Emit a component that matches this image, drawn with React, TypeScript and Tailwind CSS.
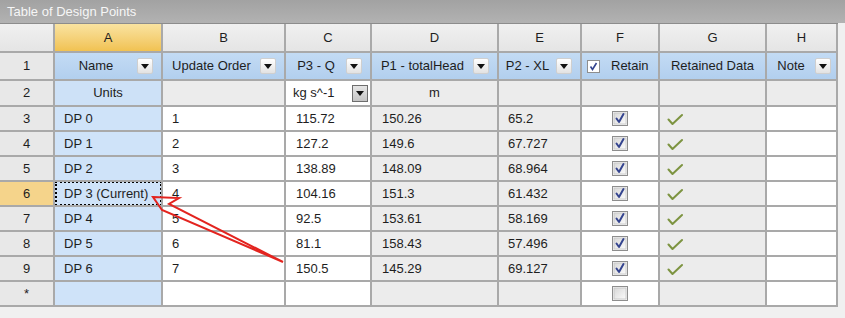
import React from "react";

const GRID =
  "grid grid-cols-[55px_108px_123px_86px_127px_83px_78px_107px_71px]";
const CELL =
  "border-r-2 border-b-2 border-[#a9a9a9] flex items-center text-[13px] text-[#1e1e1e] overflow-hidden whitespace-nowrap";

const rows = [
  ["DP 0", "1", "115.72", "150.26", "65.2"],
  ["DP 1", "2", "127.2", "149.6", "67.727"],
  ["DP 2", "3", "138.89", "148.09", "68.964"],
  ["DP 3 (Current)", "4", "104.16", "151.3", "61.432"],
  ["DP 4", "5", "92.5", "153.61", "58.169"],
  ["DP 5", "6", "81.1", "158.43", "57.496"],
  ["DP 6", "7", "150.5", "145.29", "69.127"],
];

const DropButton = () => (
  <div className="w-4 h-4 shrink-0 rounded-[2px] border border-[#cfcfcf] bg-gradient-to-b from-white to-[#e2e2e2] flex items-center justify-center">
    <svg width="8" height="5" viewBox="0 0 8 5">
      <polygon points="0,0 8,0 4,5" fill="#111" />
    </svg>
  </div>
);

const ComboButton = () => (
  <div className="w-4 h-[17px] shrink-0 border border-[#6e6e6e] bg-gradient-to-b from-[#e6e6e6] to-[#c4c4c4] flex items-center justify-center">
    <svg width="8" height="5" viewBox="0 0 8 5">
      <polygon points="0,0 8,0 4,5" fill="#111" />
    </svg>
  </div>
);

const CheckBox = ({ checked, size = 16 }: { checked: boolean; size?: number }) => (
  <svg width={size} height={size - 1} viewBox="0 0 16 15">
    <defs>
      <linearGradient id="cbg" x1="0" y1="0" x2="1" y2="1">
        <stop offset="0" stopColor="#d8d8d8" />
        <stop offset="1" stopColor="#fbfbfb" />
      </linearGradient>
    </defs>
    <rect x="0.5" y="0.5" width="15" height="14" fill="#f6f6f6" stroke="#8e8e8e" />
    <rect x="2" y="2" width="12" height="11" fill="url(#cbg)" stroke="#c4c4c4" strokeWidth="0.8" />
    {checked && (
      <path
        d="M4.5 7.5 L7 11 L11.5 3"
        fill="none"
        stroke="#34448f"
        strokeWidth="2"
        strokeLinecap="round"
        strokeLinejoin="round"
      />
    )}
  </svg>
);

const GreenCheck = () => (
  <svg width="16" height="14" viewBox="0 0 16 14">
    <path
      d="M1.5 7.5 L5.5 12 L15 3"
      fill="none"
      stroke="#7d9441"
      strokeWidth="2"
      strokeLinecap="round"
      strokeLinejoin="round"
    />
  </svg>
);

export default function App() {
  return (
    <div
      className="relative w-[845px] h-[318px] bg-[#f0f0f0] overflow-hidden"
      style={{ fontFamily: '"Liberation Sans", Arial, sans-serif' }}
    >
      {/* Title bar */}
      <div className="h-[23px] bg-gradient-to-b from-[#a2a2a2] to-[#b2b2b2] flex items-center pl-[7px] text-[13px] text-[#f6f6f6]">
        Table of Design Points
      </div>

      <div className="w-[838px]">
        {/* Column letters */}
        <div className={`${GRID} h-[30px] border-t border-[#8c8c8c]`}>
          {["", "A", "B", "C", "D", "E", "F", "G", "H"].map((l, i) => (
            <div
              key={i}
              className={`${CELL} justify-center ${
                i === 1
                  ? "bg-gradient-to-b from-[#f9e3a0] to-[#f1c251]"
                  : "bg-gradient-to-b from-[#f0f0f0] to-[#e5e5e5]"
              }`}
            >
              {l}
            </div>
          ))}
        </div>

        {/* Row 1: parameter headers */}
        <div className={`${GRID} h-[28px]`}>
          <div className={`${CELL} justify-center bg-[#e8e8e8]`}>1</div>
          {[
            "Name",
            "Update Order",
            "P3 - Q",
            "P1 - totalHead",
            "P2 - XL",
          ].map((h) => (
            <div
              key={h}
              className={`${CELL} bg-gradient-to-b from-[#c3dbf4] to-[#b2cfee] pr-2`}
            >
              <span className="flex-1 text-center">{h}</span>
              <DropButton />
            </div>
          ))}
          <div className={`${CELL} bg-gradient-to-b from-[#c3dbf4] to-[#b2cfee] pl-[5px] gap-[11px]`}>
            <div className="w-[13px] h-[13px] border border-[#8e8e8e] bg-white flex items-center justify-center">
              <svg width="9" height="9" viewBox="0 0 9 9">
                <path d="M1.5 4.5 L3.5 7.5 L7.5 1" fill="none" stroke="#34448f" strokeWidth="1.6" />
              </svg>
            </div>
            <span>Retain</span>
          </div>
          <div className={`${CELL} bg-gradient-to-b from-[#c3dbf4] to-[#b2cfee] justify-center`}>
            Retained Data
          </div>
          <div className={`${CELL} bg-gradient-to-b from-[#c3dbf4] to-[#b2cfee] pr-[5px]`}>
            <span className="flex-1 text-center">Note</span>
            <DropButton />
          </div>
        </div>

        {/* Row 2: units */}
        <div className={`${GRID} h-[26px]`}>
          <div className={`${CELL} justify-center bg-[#e8e8e8]`}>2</div>
          <div className={`${CELL} justify-center bg-[#cde1f7]`}>Units</div>
          <div className={`${CELL} bg-[#ececec]`} />
          <div className={`${CELL} bg-white pl-[7px] pr-[2px]`}>
            <span className="flex-1">kg s^-1</span>
            <ComboButton />
          </div>
          <div className={`${CELL} justify-center bg-[#ececec]`}>m</div>
          <div className={`${CELL} bg-[#ececec]`} />
          <div className={`${CELL} bg-[#ececec]`} />
          <div className={`${CELL} bg-[#ececec]`} />
          <div className={`${CELL} bg-[#ececec]`} />
        </div>

        {/* Design points */}
        {rows.map((r, idx) => {
          const current = idx === 3;
          return (
            <div key={r[0]} className={`${GRID} h-[25px]`}>
              <div
                className={`${CELL} justify-center ${
                  current ? "bg-[#f5d48b]" : "bg-[#e8e8e8]"
                }`}
              >
                {idx + 3}
              </div>
              <div className={`${CELL} relative bg-[#cfe3f9] pl-[9px]`}>
                {r[0]}
                {current && (
                  <div className="absolute -top-[1px] left-0 right-[-1px] bottom-[-1px] border-2 border-dotted border-black" />
                )}
              </div>
              <div className={`${CELL} bg-white pl-[9px]`}>{r[1]}</div>
              <div className={`${CELL} bg-white pl-[10px]`}>{r[2]}</div>
              <div className={`${CELL} bg-[#ececec] pl-[10px]`}>{r[3]}</div>
              <div className={`${CELL} bg-[#ececec] pl-[9px]`}>{r[4]}</div>
              <div className={`${CELL} bg-white justify-center`}>
                <CheckBox checked />
              </div>
              <div className={`${CELL} bg-[#ececec] pl-[7px]`}>
                <GreenCheck />
              </div>
              <div className={`${CELL} bg-white`} />
            </div>
          );
        })}

        {/* New row */}
        <div className={`${GRID} h-[25px]`}>
          <div className={`${CELL} justify-center bg-[#e8e8e8]`}>*</div>
          <div className={`${CELL} bg-[#cfe3f9]`} />
          <div className={`${CELL} bg-white`} />
          <div className={`${CELL} bg-white`} />
          <div className={`${CELL} bg-[#ececec]`} />
          <div className={`${CELL} bg-[#ececec]`} />
          <div className={`${CELL} bg-white justify-center`}>
            <CheckBox checked={false} />
          </div>
          <div className={`${CELL} bg-[#ececec]`} />
          <div className={`${CELL} bg-white`} />
        </div>
      </div>

      {/* Red annotation arrow */}
      <svg
        className="absolute top-0 left-0 pointer-events-none"
        width="845"
        height="318"
        viewBox="0 0 845 318"
      >
        <polygon
          points="153,197 179,198 169,204 283,262 162,210"
          fill="none"
          stroke="#e3241f"
          strokeWidth="2"
          strokeLinejoin="miter"
        />
      </svg>
    </div>
  );
}
